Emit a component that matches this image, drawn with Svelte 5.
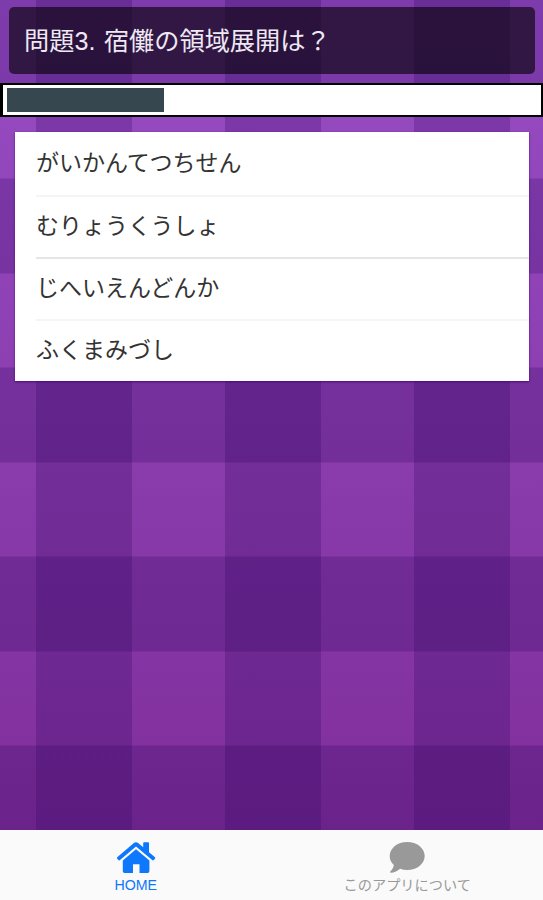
<script lang="ts">
    type Answer = {
        id: number;
        text: string;
    };

    const questionNo = 3;
    const question = "宿儺の領域展開は？";
    const answers: Answer[] = [
        { id: 1, text: "がいかんてつちせん" },
        { id: 2, text: "むりょうくうしょ" },
        { id: 3, text: "じへいえんどんか" },
        { id: 4, text: "ふくまみづし" }
    ];

    let progress = 29.7;
    let selected = 0;
    let tab = "home";

    function selectAnswer(id: number) {
        selected = id;
    }
</script>

<style>
    :global(body) {
        margin: 0;
    }

    .app {
        display: flex;
        flex-direction: column;
        height: 900px;
        overflow: hidden;
        font-family: "Liberation Sans", "Noto Sans CJK JP", sans-serif;
    }

    /* checked cloth background */
    .page {
        flex: 1;
        min-height: 0;
        background-image:
            repeating-linear-gradient(90deg, rgba(38, 0, 88, 0.23) 0 96px, transparent 96px 189px),
            repeating-linear-gradient(180deg, rgba(38, 0, 88, 0.23) 0 95px, transparent 95px 189px),
            linear-gradient(180deg, #984dc5 0%, #8f42b5 37%, #893aaa 61%, #802e9b 100%);
        background-position: 36px 0, 0 -10.5px, 0 0;
        background-size: 189px 100%, 100% 189px, 100% 100%;
    }

    .question {
        box-sizing: border-box;
        height: 67px;
        margin: 7px 8px 9px 9px;
        padding-left: 15px;
        border-radius: 5px;
        background: rgba(0, 0, 0, 0.6);
        color: #eee8f3;
        font-size: 25.2px;
        font-weight: normal;
        line-height: 69px;
        word-spacing: 1.5px;
        white-space: nowrap;
    }

    .progress {
        box-sizing: border-box;
        height: 34px;
        padding: 3px 4px;
        border: solid #000;
        border-width: 2px 2px 2px 3px;
        background: #fff;
    }

    .bar {
        height: 24px;
        background: #37474f;
    }

    .answers {
        margin: 15px 14px 0 15px;
        padding: 0;
        list-style: none;
        background: #fff;
        box-shadow: 0 1px 2px rgba(70, 0, 120, 0.8);
    }

    .answers li {
        padding-left: 21px;
    }

    .answers button {
        display: block;
        box-sizing: border-box;
        width: 100%;
        height: 62px;
        padding: 0 0 2px;
        border: none;
        background: none;
        color: #333;
        font: inherit;
        font-size: 23px;
        line-height: 60px;
        text-align: left;
        cursor: pointer;
    }

    .answers li + li button {
        border-top: 2px solid #f5f5f5;
        line-height: 58px;
    }

    .answers li:nth-child(3) button {
        border-top-color: #e5e5e5;
    }

    .answers li:first-child button {
        height: 63px;
    }

    .tabbar {
        display: flex;
        height: 70px;
        background: #fafafa;
    }

    .tab {
        display: flex;
        flex: 1;
        flex-direction: column;
        align-items: center;
        padding: 11px 0 0;
        border: none;
        background: none;
        color: #999;
        font: inherit;
        font-size: 14.2px;
        cursor: pointer;
    }

    .tab svg {
        display: block;
        width: 40px;
        height: 33px;
        fill: currentColor;
    }

    .tab span {
        height: 20px;
        margin-top: 1px;
        line-height: 20px;
    }

    .tab.active {
        color: #0d78fb;
    }
</style>

<div class="app">
    <div class="page">
        <div class="question">問題{questionNo}. {question}</div>
        <div class="progress">
            <div class="bar" style="width: {progress}%"></div>
        </div>
        <ul class="answers">
            {#each answers as answer}
            <li>
                <button aria-pressed={selected === answer.id} on:click={() => selectAnswer(answer.id)}>{answer.text}</button>
            </li>
            {/each}
        </ul>
    </div>

    <div class="tabbar">
        <button class="tab" class:active={tab === "home"} on:click={() => tab = "home"}>
            <svg viewBox="0 0 40 33">
                <path d="M20 8.2 L33.4 19.4 V30.2 Q33.4 32 31.6 32 H23.5 V23.3 H17 V32 H8.6 Q6.8 32 6.8 30.2 V19.4 Z" />
                <path d="M17.9 2 Q20 .3 22.1 2 L27.2 6.3 V2.1 Q27.2 1.2 28.1 1.2 H32.1 Q33 1.2 33 2.1 V11.2 L39 16.3 Q39.7 16.9 39.1 17.6 L37.8 19.1 Q37.2 19.8 36.5 19.2 L20 5.5 L3.7 19.2 Q3 19.8 2.4 19.1 L1.1 17.6 Q.5 16.9 1.2 16.3 Z" />
            </svg>
            <span>HOME</span>
        </button>
        <button class="tab" class:active={tab === "about"} on:click={() => tab = "about"}>
            <svg viewBox="0 0 40 33">
                <path d="M20.2 1 C29.9 1 37.7 7.2 37.7 15 C37.7 22.8 29.9 29 20.2 29 C17.7 29 15.3 28.6 13.1 27.8 C10.7 30.2 7.3 31.6 3.8 31.8 C2.9 31.8 2.8 31.1 3.3 30.6 C5.2 28.8 6.5 26.7 6.8 24.1 C4.1 21.6 2.7 18.5 2.7 15 C2.7 7.2 10.5 1 20.2 1 Z" />
            </svg>
            <span>このアプリについて</span>
        </button>
    </div>
</div>
